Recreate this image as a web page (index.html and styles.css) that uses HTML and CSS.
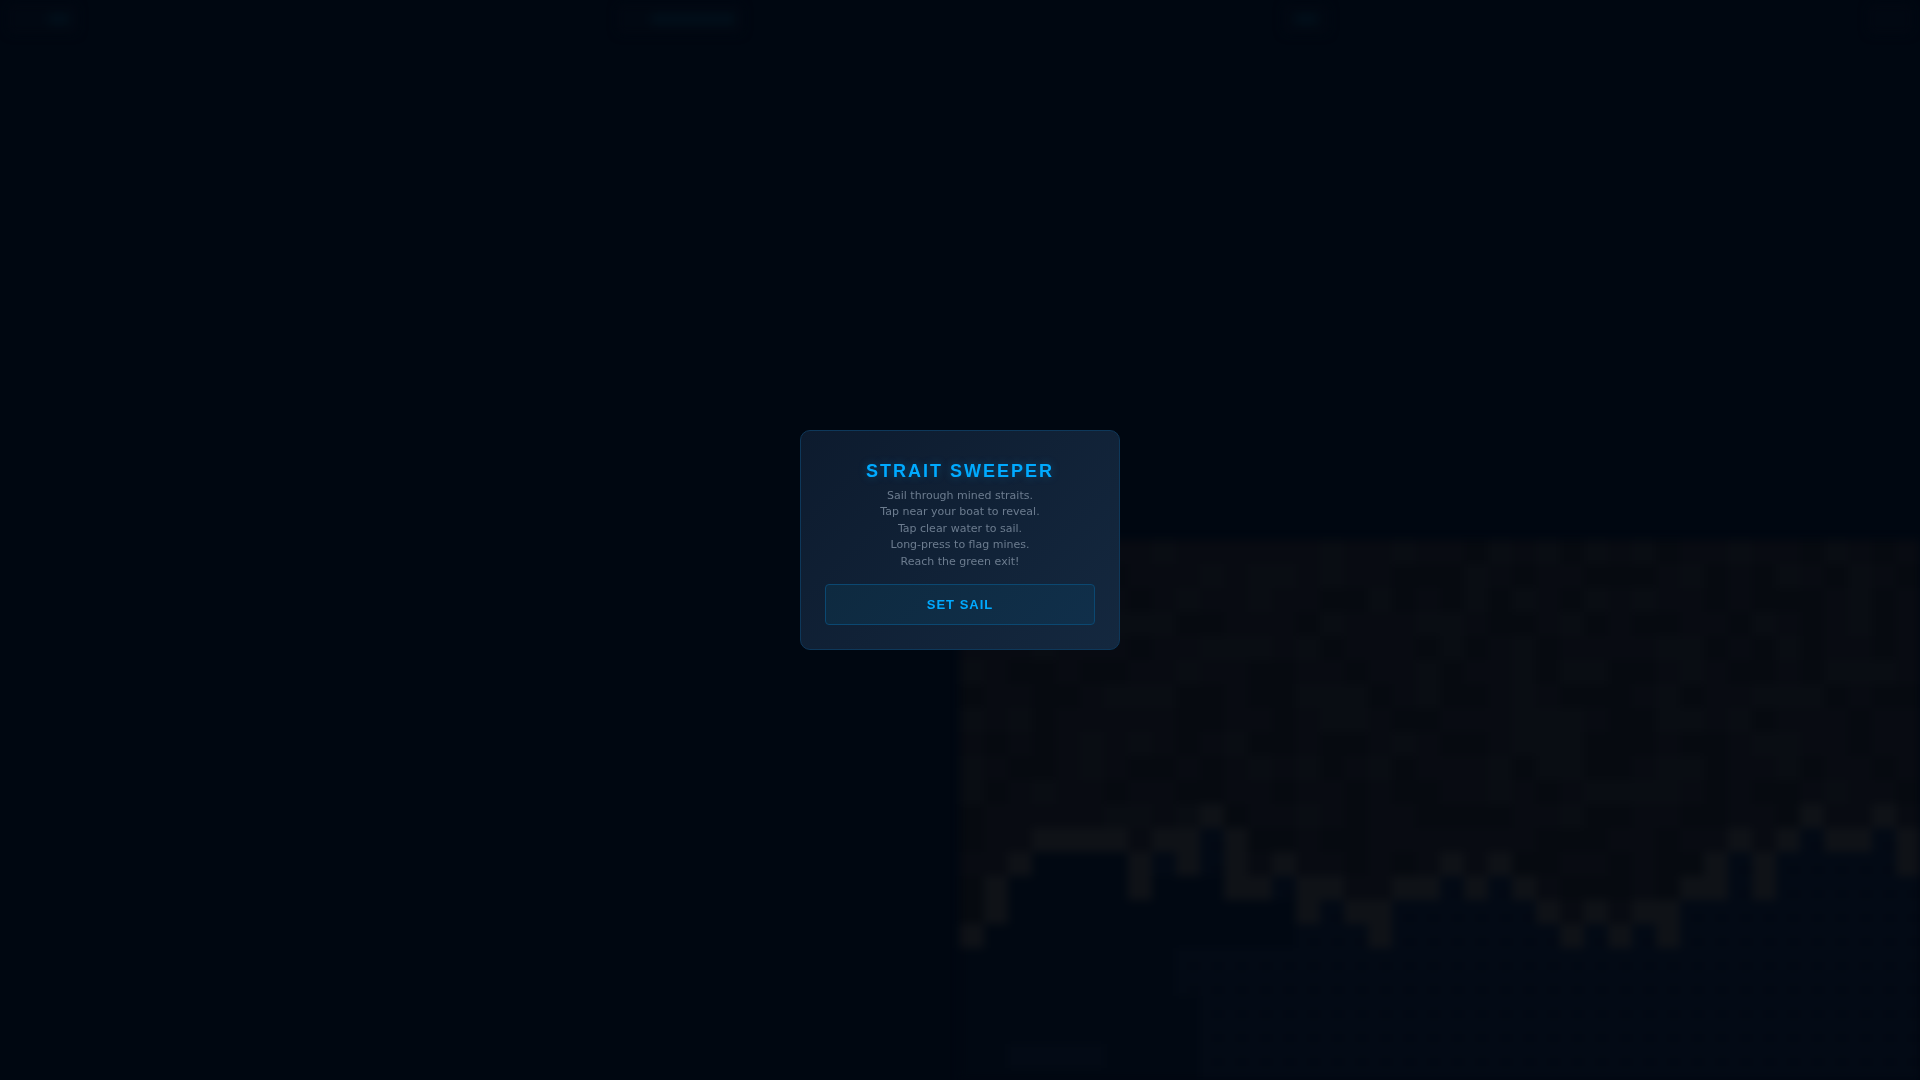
FILE: index.html
```
<!DOCTYPE html>
<html lang="en">
<head>
  <meta charset="UTF-8">
  <meta name="viewport" content="width=device-width, initial-scale=1.0">
  <title>Strait Sweeper</title>
  <link rel="stylesheet" href="styles.css">
</head>
<body>
  <div class="game">
    <header class="hud" aria-hidden="true">
      <div class="chip chip-level"><span class="glow"></span></div>
      <div class="chip chip-status"><span class="glow"></span></div>
      <div class="chip chip-score"><span class="glow"></span></div>
      <div class="chip chip-menu"></div>
    </header>
    <canvas class="sea" id="sea" width="960" height="540"></canvas>
  </div>

  <div class="overlay">
    <main class="card">
      <h1>STRAIT SWEEPER</h1>
      <p>Sail through mined straits.<br>Tap near your boat to reveal.<br>Tap clear water to sail.<br>Long-press to flag mines.<br>Reach the green exit!</p>
      <button type="button" class="start">SET SAIL</button>
    </main>
  </div>

  <script src="map.js"></script>
</body>
</html>
```
FILE: styles.css
```
* {
  box-sizing: border-box;
  margin: 0;
  padding: 0;
}
body {
  background: #000711;
  font-family: "DejaVu Sans", sans-serif;
  overflow: hidden;
}
.game {
  min-height: 100vh;
  display: flex;
  flex-direction: column;
  justify-content: space-between;
}
.hud {
  display: flex;
  justify-content: space-between;
  padding: 4px 8px;
  filter: blur(5px);
}
.chip {
  height: 30px;
  display: flex;
  align-items: center;
  justify-content: flex-end;
  padding: 0 8px;
  border-radius: 6px;
  background: #010812;
}
.chip-level {
  width: 70px;
}
.chip-status {
  width: 126px;
}
.chip-score {
  width: 46px;
  justify-content: center;
}
.chip-menu {
  width: 44px;
}
.glow {
  width: 22px;
  height: 12px;
  background: #010e19;
}
.chip-status .glow {
  width: 84px;
}
.sea {
  width: 50%;
  height: 50vh;
  margin-left: auto;
  filter: blur(4px);
}
.overlay {
  position: fixed;
  inset: 0;
  display: flex;
  align-items: center;
  justify-content: center;
}
.card {
  width: 320px;
  padding: 24px;
  text-align: center;
  background: linear-gradient(135deg, #0d1b2e, #14283f);
  border: 1px solid #0e385a;
  border-radius: 10px;
}
h1 {
  font-family: "Liberation Sans", sans-serif;
  font-size: 18px;
  line-height: 32px;
  letter-spacing: 2px;
  color: #00aaff;
  text-shadow: 0 0 10px rgba(0, 170, 255, 0.3);
}
p {
  margin: 1px 0 14px;
  font-size: 11px;
  line-height: 1.5;
  color: #6c7c8f;
}
.start {
  display: block;
  width: 100%;
  height: 41px;
  font-family: "Liberation Sans", sans-serif;
  font-size: 13px;
  font-weight: bold;
  letter-spacing: 1px;
  color: #00aaff;
  background: linear-gradient(135deg, #0e2a40, #102f4a);
  border: 1px solid #0b4871;
  border-radius: 4px;
  cursor: pointer;
}
```
FILE: map.js
```
// a-c land from dark to light, e shore, . deep water, - shallow water
const map = [
  'bbbbbbbbcbbbbbbcbbcbbacbcacbcabbcbbacbab',
  'baabbbabbbcbccbcbbaaacbabbaaabcabacbacba',
  'bbbbbbbabcbbcbbaacabacacbacbcbbabaaabcab',
  'bbbccccccaabbbacbbbccbaabcabaabbacbabcab',
  'bbbcbbbabbcccbcabbbacabcabbbbccabacabbab',
  'cbaabaabbcbbaabbabbcabbcaccaabcbaabacccb',
  'abbaabcccaabaacccabcaabcbaaabcabbcccabaa',
  'cbcabbbbbaabbabccbaabbbcccbaaccbcabbbabb',
  'bababcbcbabcaabaabcbaabcccaaabaabccbbabb',
  'cbaabcbaababcbcabcabbbcaccaabccabbcabbab',
  'cabcbbabbaabbabbabaabbcbabccccbabaabcbba',
  'abbbbbccbceabbcbabbaaaabbcaabbaabbaebbeb',
  'abbeeeebbe-eaabaabbbbbbbaaabbabbebe-eebe',
  'bbe....eb-e-eabbabaebebaabbabaae-e------',
  'ae.....e...eeb--bbeebebbbaaababbee-e----',
  'ae............e-ee------ebebee----------',
  'e.............---e-------e-e-e----------',
  '.........-------------------------------',
  '.........-------------------------------',
  '..........------------------------------',
  '..........------------------------------',
  '..----....------------------------------',
  '..........------------------------------'
];

// last land row of every column
const coast = [16, 15, 13, 12, 12, 12, 12, 14, 12, 13, 11, 14, 14, 13, 15, 14, 15, 16, 14, 14,
  13, 14, 13, 14, 15, 16, 15, 16, 15, 16, 14, 14, 12, 14, 12, 11, 12, 12, 11, 13];
// shore tiles that sit above the last land row
const shore = ['11,12', '11,13', '7,13', '9,12', '1,14', '14,14', '17,15', '29,15', '31,13', '33,13', '39,12'];

const colors = {
  a: '#060a10',
  b: '#080b12',
  c: '#090d13',
  e: '#0f1217',
  '.': '#010812',
  '-': '#030a15'
};

const size = 24;
const sea = document.getElementById('sea');
const ctx = sea.getContext('2d');

for (let y = 0; y < map.length; y++) {
  for (let x = 0; x < 40; x++) {
    let tile = map[y][x];
    const land = y <= coast[x];
    if (y === coast[x] || shore.includes(x + ',' + y)) {
      tile = 'e';
    } else if (land && !'abc'.includes(tile)) {
      tile = 'b';
    } else if (!land && tile !== '.') {
      tile = '-';
    }
    ctx.fillStyle = colors[tile];
    ctx.fillRect(x * size, y * size, size, size);
    if (tile === '-' && x > 8) {
      ctx.fillStyle = '#020812';
      ctx.fillRect(x * size + 14, y * size + 14, 8, 8);
    }
  }
}
```
